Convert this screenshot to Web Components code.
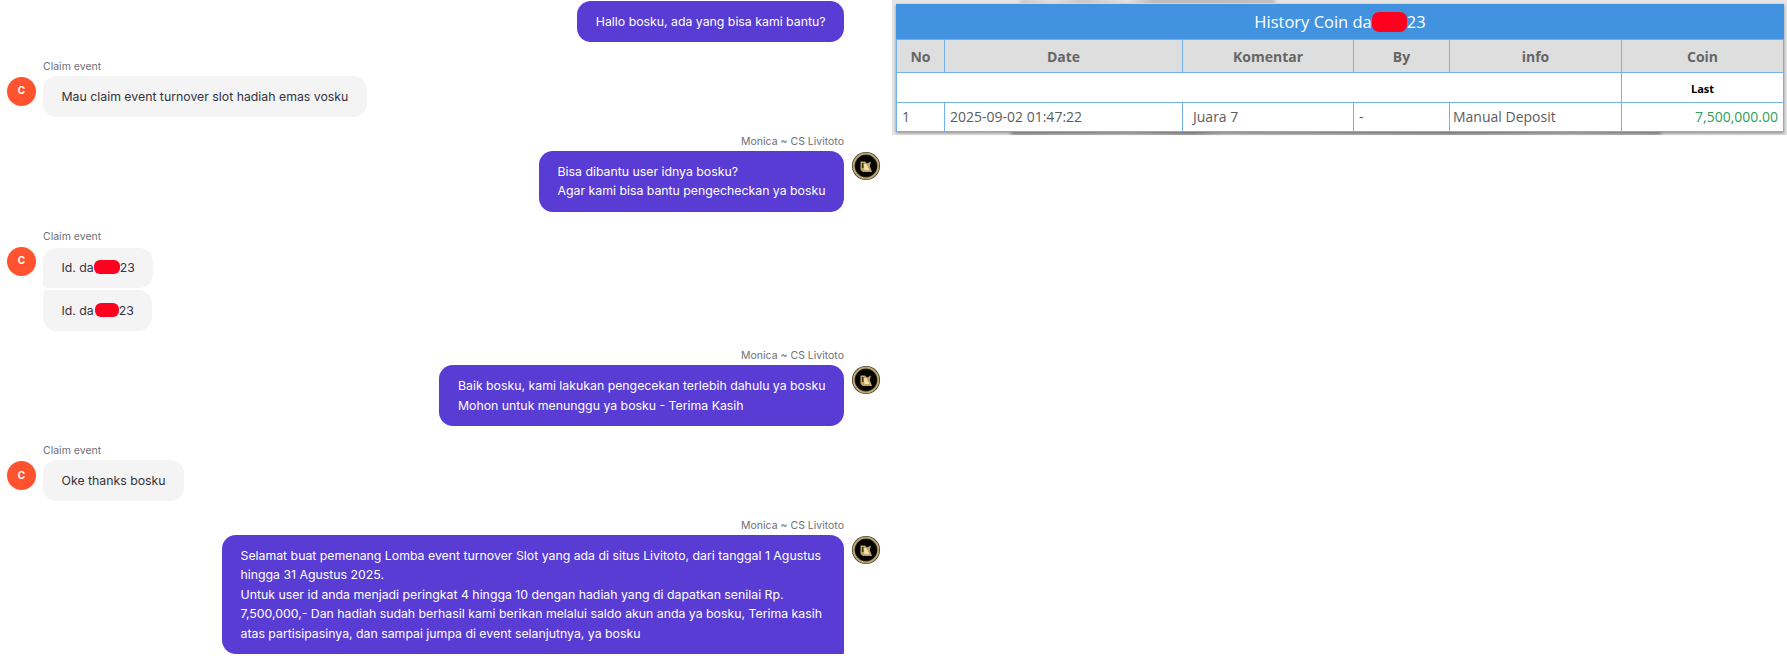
<!DOCTYPE html>
<html>
<head>
<meta charset="utf-8">
<title>History Coin</title>
<style>
    html, body {
        margin: 0;
        background-color: #FFFFFF;
    }
    body {
        width: 1787px;
        height: 659px;
        overflow: hidden;
    }
</style>
</head>
<body>
<support-page>
    <chat-pane slot="chat">
        <chat-message side="out" no-avatar>Hallo bosku, ada yang bisa kami bantu?</chat-message>

        <chat-message side="in" label="Claim event">Mau claim event turnover slot hadiah emas vosku</chat-message>

        <chat-message side="out" label="Monica ~ CS Livitoto">Bisa dibantu user idnya bosku?<br>Agar kami bisa bantu pengecheckan ya bosku</chat-message>

        <chat-message side="in" label="Claim event" lead style="--label-gap: 4px">Id. da<red-mark></red-mark>23</chat-message>
        <chat-message side="in" follow>Id. da<red-mark narrow></red-mark>23</chat-message>

        <chat-message side="out" label="Monica ~ CS Livitoto">Baik bosku, kami lakukan pengecekan terlebih dahulu ya bosku<br>Mohon untuk menunggu ya bosku - Terima Kasih</chat-message>

        <chat-message side="in" label="Claim event">Oke thanks bosku</chat-message>

        <chat-message side="out" label="Monica ~ CS Livitoto" square>Selamat buat pemenang Lomba event turnover Slot yang ada di situs Livitoto, dari tanggal 1 Agustus hingga 31 Agustus 2025.<br>Untuk user id anda menjadi peringkat 4 hingga 10 dengan hadiah yang di dapatkan senilai Rp. 7,500,000,- Dan hadiah sudah berhasil kami berikan melalui saldo akun anda ya bosku, Terima kasih atas partisipasinya, dan sampai jumpa di event selanjutnya, ya bosku</chat-message>
    </chat-pane>
    <coin-history slot="side"></coin-history>
</support-page>

<script>
class SupportPage extends HTMLElement {
    constructor() {
        super();
        this.attachShadow({ mode: 'open' }).innerHTML = `
            <style>
                :host {
                    display: flex;
                    align-items: flex-start;
                    width: 1787px;
                }
                .left { flex: 0 0 892px; }
                .right { flex: 1 1 auto; }
            </style>
            <div class="left"><slot name="chat"></slot></div>
            <div class="right"><slot name="side"></slot></div>
        `;
    }
}

class ChatPane extends HTMLElement {
    constructor() {
        super();
        this.attachShadow({ mode: 'open' }).innerHTML = `
            <style>
                :host {
                    display: flex;
                    flex-flow: column nowrap;
                    padding: 1px 12px 0 7px;
                    font-family: Inter, "Liberation Sans", sans-serif;
                }
            </style>
            <slot></slot>
        `;
    }
}

class ChatMessage extends HTMLElement {
    constructor() {
        super();
        const side = this.getAttribute('side');
        const label = this.getAttribute('label');
        const follow = this.hasAttribute('follow');
        let avatar = '<div class="spacer"></div>';
        if (!this.hasAttribute('no-avatar') && !follow) {
            avatar = side === 'out' ? '<gold-avatar></gold-avatar>' : '<letter-avatar>C</letter-avatar>';
        }
        this.attachShadow({ mode: 'open' }).innerHTML = `
            <style>
                :host {
                    display: flex;
                    margin-top: 18px;
                }
                :host(:first-child) { margin-top: 0; }
                :host([follow]) { margin-top: 2px; }
                :host([side="out"]) { flex-direction: row-reverse; }
                .spacer { flex: 0 0 29px; }
                :host([side="out"]) .spacer { flex-basis: 28px; }
                gold-avatar, letter-avatar { margin-top: 17px; }
                .body {
                    display: flex;
                    flex-flow: column nowrap;
                    align-items: flex-start;
                    margin: 0 8px;
                    max-width: 622px;
                }
                :host([side="in"]) .body { margin-left: 7px; margin-right: 0; }
                :host([side="out"]) .body { align-items: flex-end; }
                .label {
                    height: 14px;
                    margin-bottom: var(--label-gap, 2px);
                    font-size: 10.5px;
                    line-height: 14px;
                    color: #6f6f78;
                    white-space: nowrap;
                }
                .bubble {
                    padding: 10.7px 18.5px;
                    font-size: 12.3px;
                    line-height: 19.6px;
                    border-radius: 14px;
                    color: #33333d;
                    background-color: #F4F4F5;
                }
                :host([side="out"]) .bubble {
                    color: #FFFFFF;
                    background-color: #583CD4;
                }
                :host([square]) .bubble { border-bottom-right-radius: 1px; }
                :host([lead]) .bubble { border-bottom-left-radius: 4px; }
                :host([follow]) .bubble { border-top-left-radius: 4px; }
            </style>
            ${avatar}
            <div class="body">
                ${label ? `<div class="label">${label}</div>` : ''}
                <div class="bubble"><slot></slot></div>
            </div>
        `;
    }
}

class LetterAvatar extends HTMLElement {
    constructor() {
        super();
        this.attachShadow({ mode: 'open' }).innerHTML = `
            <style>
                :host {
                    display: flex;
                    flex: 0 0 29px;
                    width: 29px;
                    height: 29px;
                    align-items: center;
                    justify-content: center;
                    box-sizing: border-box;
                    padding-bottom: 2px;
                    border-radius: 50%;
                    font-size: 10px;
                    font-weight: 700;
                    color: #FFFFFF;
                    background-color: #FF5330;
                }
            </style>
            <slot></slot>
        `;
    }
}

class GoldAvatar extends HTMLElement {
    constructor() {
        super();
        this.attachShadow({ mode: 'open' }).innerHTML = `
            <style>
                :host {
                    display: block;
                    flex: 0 0 28px;
                    width: 28px;
                    height: 28px;
                }
                svg { display: block; }
            </style>
            <svg viewBox="0 0 28 28" width="28" height="28">
                <circle cx="14" cy="14" r="14" fill="#2a2412"/>
                <circle cx="14" cy="14" r="12.4" fill="none" stroke="#bda777" stroke-width="2"/>
                <circle cx="14" cy="14" r="10.6" fill="#040404"/>
                <path d="M8.5 9.5H13L15 11.5L19 9.5L17.8 14L20 20H11L8.5 18Z" fill="#c4a560"/>
                <path d="M11.5 12H14.5L15.5 14.5L17.5 18H12.5Z" fill="#efe0ae"/>
                <path d="M10 11H11.5V16H10Z" fill="#3a2d14"/>
            </svg>
        `;
    }
}

class RedMark extends HTMLElement {
    constructor() {
        super();
        this.attachShadow({ mode: 'open' }).innerHTML = `
            <style>
                :host {
                    display: inline-block;
                    width: 26px;
                    height: 14px;
                    vertical-align: -2px;
                    border-radius: 6px;
                    background-color: #FF001E;
                }
                :host([narrow]) { width: 24px; margin-left: 1px; }
                :host([wide]) {
                    width: 35px;
                    height: 20px;
                    vertical-align: -4px;
                    border-radius: 7px;
                }
            </style>
        `;
    }
}

const coinTemplate = document.createElement('template');
coinTemplate.innerHTML = `
    <style>
        :host {
            display: block;
            height: 135px;
            box-sizing: border-box;
            padding: 4px 3px 0 4px;
            font-family: "Open Sans", "Noto Sans", sans-serif;
            background-color: #e6e6e6;
            /* bits of the grey map behind the window, only the edges show */
            background-image:
                linear-gradient(90deg, #e6e6e6 126px, #cfcfcf 130px, #e0e0e0 160px, #cbcbcb 190px, #e2e2e2 236px, #bdbdbd 262px, #c0c0c0 380px, #e6e6e6 386px),
                linear-gradient(90deg, #e6e6e6 116px, #a9a9a9 122px, #bfbfbf 240px, #a5a5a5 300px, #c4c4c4 330px, #a8a8a8 560px, #c0c0c0 680px, #adadad 766px, #e0e0e0 772px);
            background-size: 100% 3px, 100% 3px;
            background-position: top, bottom;
            background-repeat: no-repeat;
        }
        .panel { box-shadow: 0 1px 3px rgba(0, 0, 0, 0.4); }
        .title {
            height: 35px;
            line-height: 35px;
            text-align: center;
            font-size: 16.5px;
            color: #FFFFFF;
            background-color: #4293DF;
        }
        table {
            width: 100%;
            table-layout: fixed;
            border-collapse: collapse;
            border-bottom: 1px solid #4293DF;
            background-color: #FFFFFF;
            font-size: 14px;
            color: #5c5c5c;
        }
        th, td {
            padding: 0 5px;
            border: 1px solid #72B2EC;
            overflow: hidden;
            white-space: nowrap;
        }
        th {
            height: 32px;
            font-weight: 700;
            color: #666666;
            background-color: #DEDEDE;
        }
        td { height: 28.5px; }
        td.last {
            height: 27px;
            padding-top: 1.5px;
            font-size: 11px;
            font-weight: 700;
            text-align: center;
            color: #000000;
        }
        .note { padding-left: 10px; }
        .info { padding-left: 3px; }
        .amount {
            text-align: right;
            color: #2E9E5B;
        }
    </style>
    <div class="panel">
        <div class="title">History Coin da<red-mark wide></red-mark>23</div>
        <table>
            <colgroup>
                <col style="width: 48px">
                <col style="width: 238px">
                <col style="width: 171px">
                <col style="width: 96px">
                <col style="width: 172px">
                <col>
            </colgroup>
            <tr><th>No</th><th>Date</th><th>Komentar</th><th>By</th><th>info</th><th>Coin</th></tr>
            <tr><td colspan="5"></td><td class="last">Last</td></tr>
            <tr>
                <td>1</td>
                <td>2025-09-02 01:47:22</td>
                <td class="note">Juara 7</td>
                <td>-</td>
                <td class="info">Manual Deposit</td>
                <td class="amount">7,500,000.00</td>
            </tr>
        </table>
    </div>
`;

class CoinHistory extends HTMLElement {
    constructor() {
        super();
        this.attachShadow({ mode: 'open' }).appendChild(coinTemplate.content.cloneNode(true));
    }
}

customElements.define('support-page', SupportPage);
customElements.define('chat-pane', ChatPane);
customElements.define('chat-message', ChatMessage);
customElements.define('letter-avatar', LetterAvatar);
customElements.define('gold-avatar', GoldAvatar);
customElements.define('red-mark', RedMark);
customElements.define('coin-history', CoinHistory);
</script>
</body>
</html>
